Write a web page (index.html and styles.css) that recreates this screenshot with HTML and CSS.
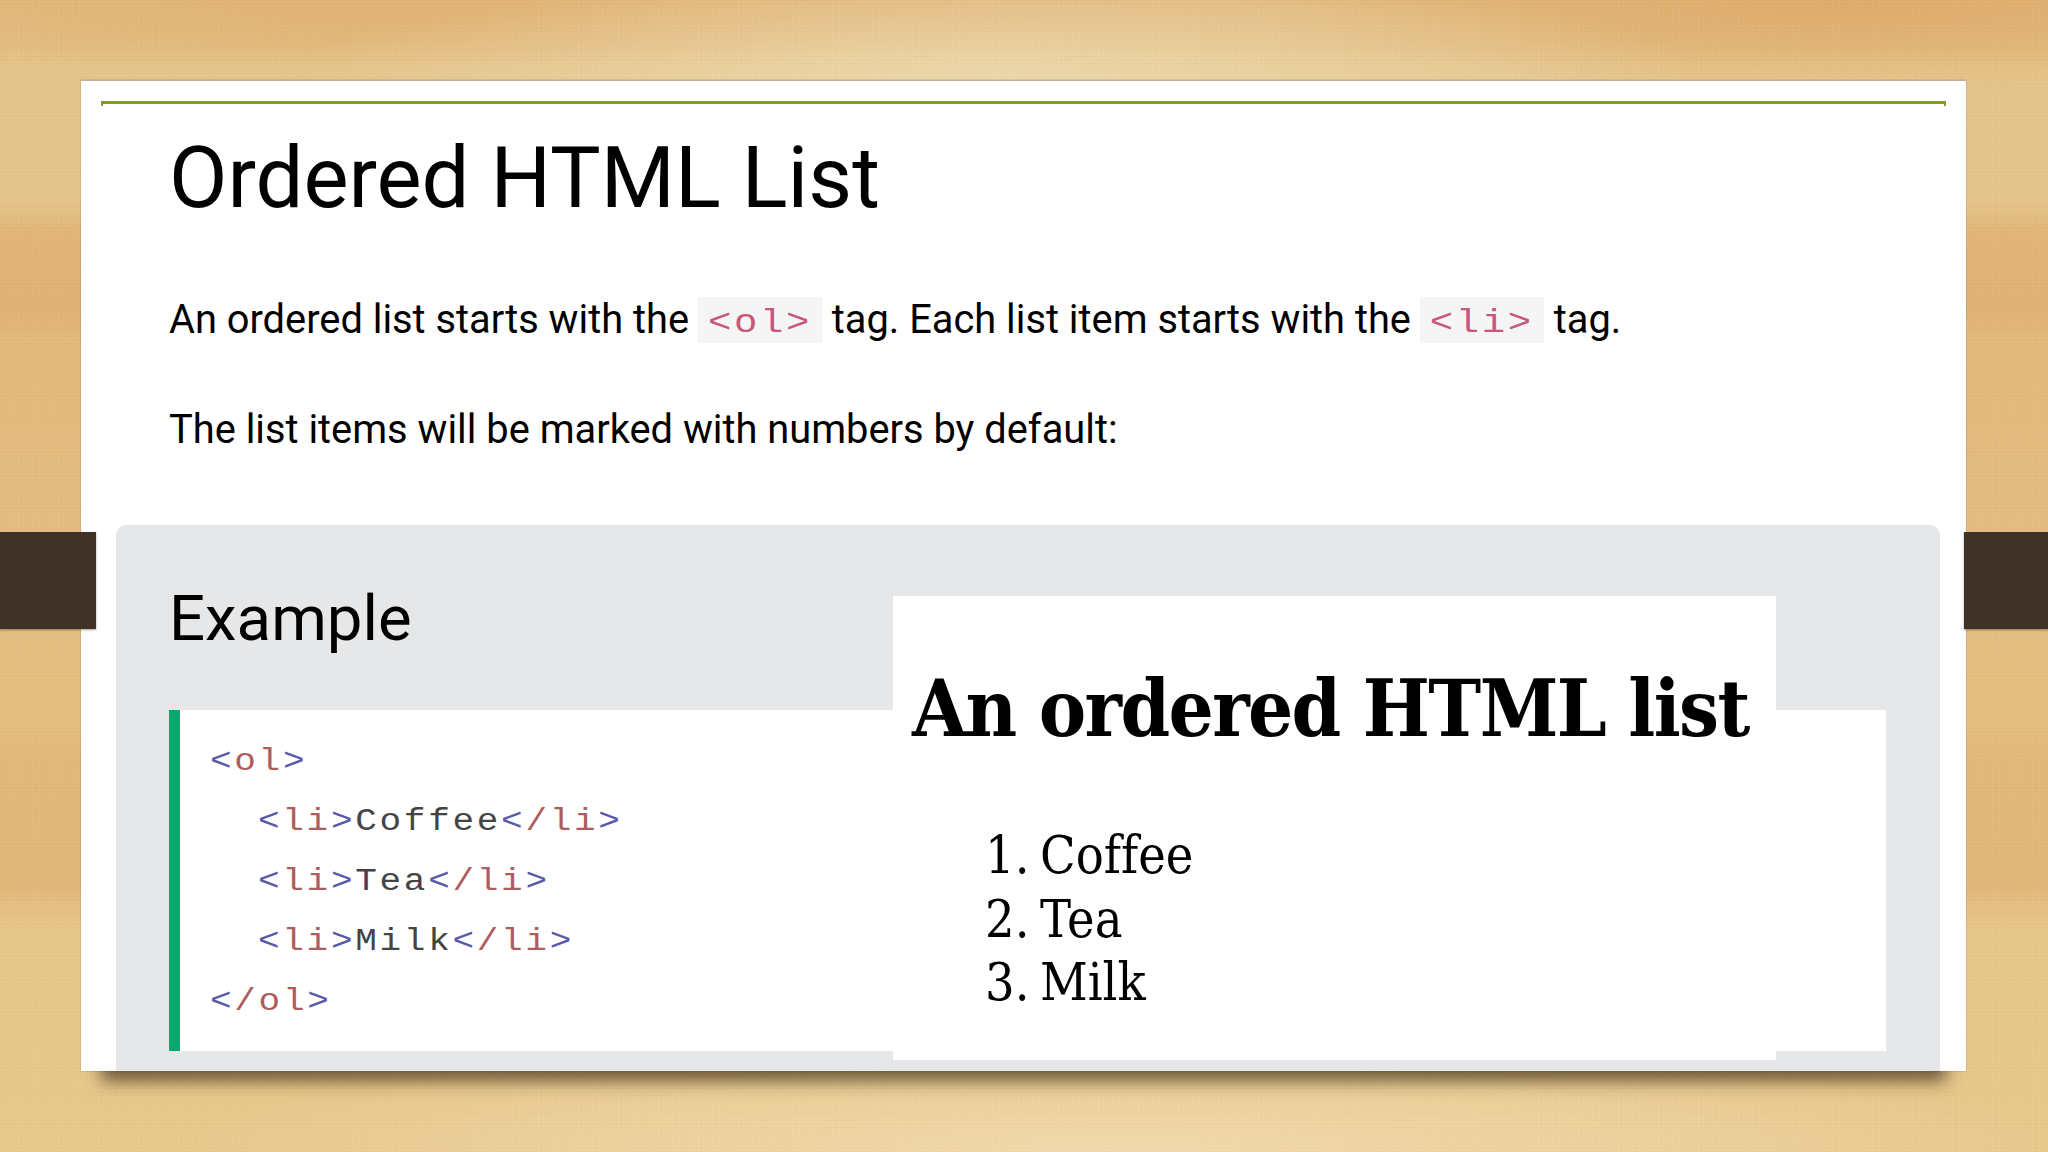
FILE: index.html
```html
<!DOCTYPE html>
<html lang="en">
<head>
<meta charset="utf-8">
<title>Ordered HTML List</title>
<link rel="stylesheet" href="styles.css">
</head>
<body>
<div class="stage">
  <div class="band band-left"></div>
  <div class="band band-right"></div>
  <main class="card">
    <div class="rule"></div>
    <h1 class="title">Ordered HTML List</h1>
    <p class="intro first">An ordered list starts with the <code class="chip"><span class="chip-text">&lt;ol&gt;</span></code> tag. Each list item starts with the <code class="chip"><span class="chip-text">&lt;li&gt;</span></code> tag.</p>
    <p class="intro second">The list items will be marked with numbers by default:</p>
    <section class="panel">
      <h2 class="panel-title">Example</h2>
      <div class="code">
        <div class="line"><span class="br">&lt;</span><span class="tag">ol</span><span class="br">&gt;</span></div>
        <div class="line in"><span class="br">&lt;</span><span class="tag">li</span><span class="br">&gt;</span>Coffee<span class="br">&lt;</span><span class="tag">/li</span><span class="br">&gt;</span></div>
        <div class="line in"><span class="br">&lt;</span><span class="tag">li</span><span class="br">&gt;</span>Tea<span class="br">&lt;</span><span class="tag">/li</span><span class="br">&gt;</span></div>
        <div class="line in"><span class="br">&lt;</span><span class="tag">li</span><span class="br">&gt;</span>Milk<span class="br">&lt;</span><span class="tag">/li</span><span class="br">&gt;</span></div>
        <div class="line"><span class="br">&lt;</span><span class="tag">/ol</span><span class="br">&gt;</span></div>
      </div>
      <div class="result">
        <h2 class="result-title">An ordered HTML list</h2>
        <ol class="result-list">
          <li>Coffee</li>
          <li>Tea</li>
          <li>Milk</li>
        </ol>
      </div>
    </section>
  </main>
</div>
</body>
</html>
```
FILE: styles.css
```css
* { box-sizing: border-box; }
html, body { margin: 0; padding: 0; }
body { width: 2048px; height: 1152px; overflow: hidden; }
.stage {
  position: relative;
  width: 2048px;
  height: 1152px;
  padding: 80px 82px 0 81px;
  background:
    repeating-linear-gradient(180deg, rgba(120,75,25,.025) 0 1px, rgba(255,240,210,.015) 1px 3px, rgba(120,75,25,.015) 3px 4px, rgba(255,240,210,.02) 4px 7px),
    repeating-linear-gradient(90deg, rgba(120,75,25,.012) 0 2px, rgba(255,240,210,.012) 2px 5px),
    radial-gradient(ellipse 720px 105px at 1000px 80px, rgba(238,218,175,.9), rgba(238,218,175,0)),
    radial-gradient(ellipse 620px 85px at 1850px 5px, rgba(222,165,100,.7), rgba(222,165,100,0)),
    radial-gradient(ellipse 620px 55px at 420px 15px, rgba(225,170,105,.5), rgba(225,170,105,0)),
    radial-gradient(ellipse 950px 110px at 1120px 1152px, rgba(244,219,176,.95), rgba(244,219,176,0)),
    linear-gradient(180deg, #e2b97d 0, #e3bd81 45px, #e5c58a 70px, #e5c58a 200px, #e2b577 232px, #e1b174 310px, #e3b87b 340px, #e4bc7f 530px, #e5be80 720px, #e3b779 760px, #e3b679 885px, #e7c68a 925px, #e8c98c 1152px);
}
.band {
  position: absolute;
  top: 532px;
  height: 97px;
  background: #3f3227;
  box-shadow: 0 1px 2px rgba(60,40,20,.45);
  z-index: 2;
}
.band-left { left: 0; width: 96px; }
.band-right { right: 0; width: 84px; }
.card {
  position: relative;
  width: 1885px;
  height: 991px;
  background: #fff;
  border-top: 1px solid #bfb29a;
  box-shadow: 0 30px 16px -20px rgba(62,44,22,.72), 0 0 1px rgba(120,100,70,.8);
}
.rule {
  height: 5px;
  margin: 20px 20px 0;
  border: solid #7f9b2c;
  border-width: 3px 2px 0;
}
.title {
  margin: 22px 0 0 88px;
  font: 400 85px/100px Roboto, sans-serif;
  color: #000;
}
.intro {
  margin: 0 0 0 88px;
  font: 400 39.8px/46px Roboto, sans-serif;
  color: #000;
}
.first { margin-top: 69px; }
.second { margin-top: 64px; }
.chip {
  display: inline-block;
  margin: 0 0 0 -1px;
  padding: 0 10px;
  height: 46px;
  vertical-align: top;
  background: #f5f5f5;
}
.chip-text {
  display: inline-block;
  font: 400 39px/54px "Liberation Mono", monospace;
  letter-spacing: 2.6px;
  color: #c9577b;
  transform: scaleY(.85);
}
.panel {
  position: absolute;
  left: 35px;
  right: 26px;
  top: 444px;
  bottom: 0;
  padding: 0 54px 0 53px;
  background: #e6e7e9;
  border-radius: 10px 10px 0 0;
}
.panel-title {
  margin: 58px 0 0;
  font: 400 63.5px/72px Roboto, sans-serif;
  color: #000;
}
.code {
  margin-top: 55px;
  height: 341px;
  padding: 22px 0 0 30px;
  background: #fff;
  border-left: 11px solid #04aa6d;
  font: 400 36px/60px "Liberation Mono", monospace;
  letter-spacing: 2.7px;
  color: #444;
}
.line { transform: scaleY(.88); }
.line.in { padding-left: 48px; }
.br { color: #5a5aa8; }
.tag { color: #ad5d5c; }
.result {
  position: absolute;
  left: 777px;
  top: 71px;
  width: 883px;
  height: 464px;
  padding: 0 0 0 19px;
  background: #fff;
  color: #000;
}
.result-title {
  margin: 68px 0 0;
  font: 700 79px/90px "DejaVu Serif", serif;
  font-stretch: condensed;
  letter-spacing: -1.6px;
  white-space: nowrap;
}
.result-list {
  margin: 70px 0 0;
  padding: 0 0 0 73px;
  list-style: none;
  counter-reset: item;
  font: 400 51.8px/63.5px "DejaVu Serif", serif;
  font-stretch: condensed;
  font-variant-ligatures: none;
}
.result-list li { counter-increment: item; }
.result-list li::before {
  content: counter(item) ".";
  display: inline-block;
  width: 55px;
}
```
